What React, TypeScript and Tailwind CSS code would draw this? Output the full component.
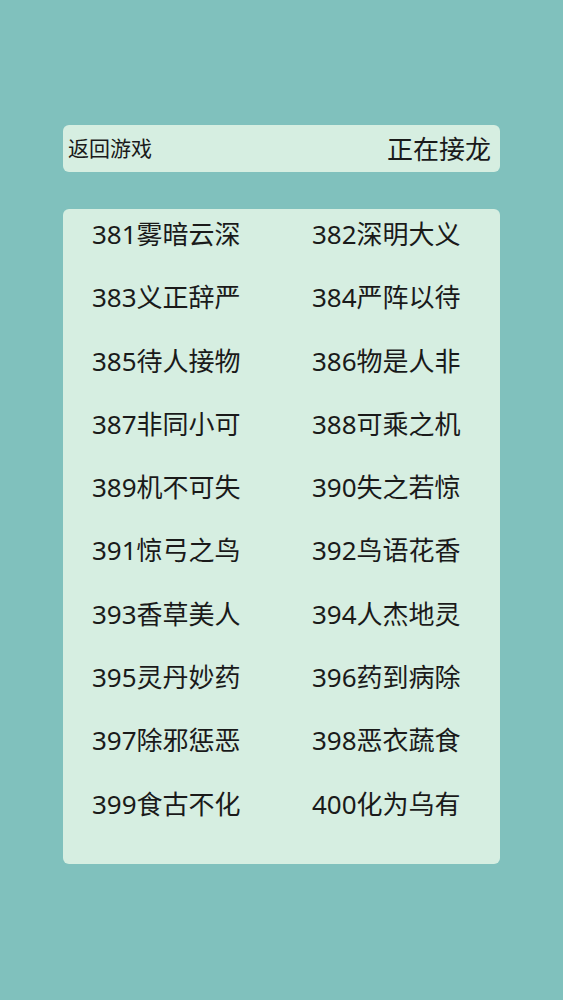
import React from "react";

const items: string[] = [
  "381雾暗云深", "382深明大义",
  "383义正辞严", "384严阵以待",
  "385待人接物", "386物是人非",
  "387非同小可", "388可乘之机",
  "389机不可失", "390失之若惊",
  "391惊弓之鸟", "392鸟语花香",
  "393香草美人", "394人杰地灵",
  "395灵丹妙药", "396药到病除",
  "397除邪惩恶", "398恶衣蔬食",
  "399食古不化", "400化为乌有",
];

export default function App() {
  return (
    <div
      className="w-[563px] h-[1000px] bg-[#80c1bd] pt-[125px] px-[63px] text-[#1a1a1a]"
      style={{ fontFamily: '"Noto Sans", "Noto Sans CJK SC", sans-serif' }}
    >
      <div className="h-[47px] rounded-[6px] bg-[#d6eee1] flex items-center justify-between pl-[5px] pr-[9px]">
        <span className="text-[21px] leading-none">返回游戏</span>
        <span className="text-[26px] leading-none">正在接龙</span>
      </div>
      <div className="mt-[37px] h-[655px] rounded-[6px] bg-[#d6eee1] pt-[7px] pl-[29px]">
        <div className="grid grid-cols-[220px_1fr] gap-y-[27.3px]">
          {items.map((t) => (
            <div key={t} className="h-[36px] flex items-center text-[26px] leading-none whitespace-nowrap">
              {t}
            </div>
          ))}
        </div>
      </div>
    </div>
  );
}
